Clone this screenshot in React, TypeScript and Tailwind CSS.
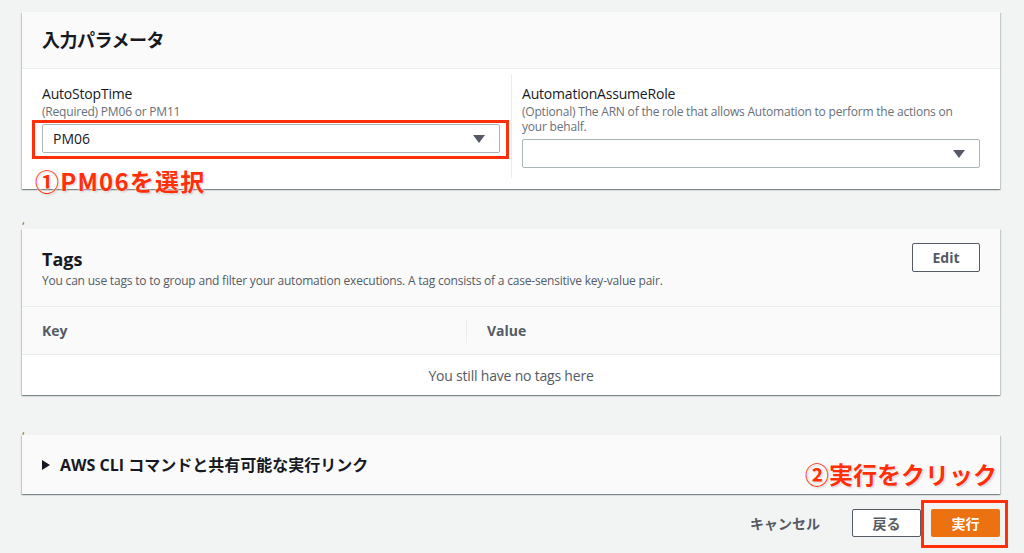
const font = "font-['Open_Sans','Noto_Sans_CJK_JP',sans-serif]"
const cardShadow =
  'shadow-[0_1px_1px_0_rgba(0,28,36,0.3),1px_1px_1px_0_rgba(0,28,36,0.15),-1px_1px_1px_0_rgba(0,28,36,0.15)]'
const note =
  "absolute font-['Noto_Sans_CJK_JP',sans-serif] font-bold text-[#ff2f0a] text-[24px] leading-[28px] [text-shadow:0_0_2px_#fff,0_0_2px_#fff,1px_1px_2px_rgba(0,0,0,0.25)]"

const Caret = () => (
  <svg width="12" height="8" viewBox="0 0 12 8">
    <path d="M0 0 L12 0 L6 8 Z" fill="#545b64" />
  </svg>
)

const Select = ({ value }: { value?: string }) => (
  <div className="flex h-[29px] items-center justify-between rounded-[2px] border border-[#aab7b8] bg-white pl-[10px] pr-[14px]">
    <span className="text-[14px] text-[#16191f]">{value}</span>
    <Caret />
  </div>
)

export default function App() {
  return (
    <div className={`relative h-[553px] w-full overflow-hidden bg-[#f2f3f3] ${font}`}>
      <div className="flex w-[978px] flex-col pl-[22px] pt-[12px] box-content">
        {/* input params */}
        <div className={`bg-white ${cardShadow}`}>
          <div className="flex h-[57px] items-center border-b border-[#eaeded] bg-[#fafafa] px-[20px]">
            <h2 className="text-[18px] font-bold tracking-[-0.5px] text-[#16191f]">入力パラメータ</h2>
          </div>
          <div className="grid h-[120px] grid-cols-2 px-[20px] pt-[5px] pb-[11px]">
            <div className="pr-[10px] pt-[10px]">
              <p className="text-[14px] leading-[20px] tracking-[-0.2px] text-[#16191f]">AutoStopTime</p>
              <p className="text-[12px] leading-[15px] tracking-[-0.2px] text-[#687078]">(Required) PM06 or PM11</p>
              <div className="mt-[5px] pr-[1px]">
                <Select value="PM06" />
              </div>
            </div>
            <div className="border-l border-[#eaeded] pl-[10px] pt-[10px]">
              <p className="text-[14px] leading-[20px] tracking-[-0.2px] text-[#16191f]">AutomationAssumeRole</p>
              <p className="pr-[10px] text-[12px] leading-[15px] tracking-[-0.2px] text-[#687078]">
                (Optional) The ARN of the role that allows Automation to perform the actions on your behalf.
              </p>
              <div className="mt-[5px]">
                <Select />
              </div>
            </div>
          </div>
        </div>

        <div className="h-[40px] pt-[28px] text-[11px] leading-[6px] text-[#545b64]">,</div>

        {/* tags */}
        <div className={`bg-white ${cardShadow}`}>
          <div className="flex h-[78px] items-start justify-between border-b border-[#eaeded] bg-[#fafafa] px-[20px] pt-[14px]">
            <div className="pt-[5px]">
              <h2 className="text-[18px] font-bold leading-[22px] text-[#16191f]">Tags</h2>
              <p className="mt-[3px] text-[12px] leading-[16px] tracking-[-0.2px] text-[#545b64]">
                You can use tags to to group and filter your automation executions. A tag consists of a case-sensitive key-value pair.
              </p>
            </div>
            <button className="h-[29px] w-[68px] rounded-[2px] border border-[#545b64] bg-white text-[14px] font-bold text-[#545b64]">
              Edit
            </button>
          </div>
          <div className="flex h-[48px] items-center border-b border-[#eaeded] bg-[#fafafa] text-[14px] font-bold text-[#545b64]">
            <div className="w-[444px] pl-[20px]">Key</div>
            <div className="h-[24px] border-l border-[#eaeded] pl-[20px] leading-[24px]">Value</div>
          </div>
          <div className="flex h-[40px] items-center justify-center text-[14px] tracking-[-0.2px] text-[#545b64]">
            You still have no tags here
          </div>
        </div>

        <div className="h-[40px] pt-[32px] text-[11px] leading-[6px] text-[#545b64]">,</div>

        {/* cli */}
        <div className={`flex h-[59px] items-center gap-[10px] bg-[#fafafa] px-[20px] ${cardShadow}`}>
          <svg width="8" height="10" viewBox="0 0 8 10">
            <path d="M0 0 L8 5 L0 10 Z" fill="#16191f" />
          </svg>
          <span className="text-[16px] font-bold text-[#16191f]">AWS CLI コマンドと共有可能な実行リンク</span>
        </div>

        {/* actions */}
        <div className="mt-[15px] flex items-center justify-end gap-[10px]">
          <button className="mr-[22px] text-[14px] font-bold text-[#545b64]">キャンセル</button>
          <button className="h-[28px] w-[69px] rounded-[2px] border border-[#545b64] bg-white text-[14px] font-bold text-[#545b64]">
            戻る
          </button>
          <button className="h-[28px] w-[69px] rounded-[2px] bg-[#ec7211] text-[14px] font-bold text-white">
            実行
          </button>
        </div>
      </div>

      {/* annotations */}
      <div className="absolute left-[32px] top-[120px] h-[39px] w-[477px] border-[3px] border-[#ff2f0a]" />
      <div className={`${note} left-[35px] top-[167px] tracking-[1.2px]`}>①PM06を選択</div>
      <div className={`${note} left-[805px] top-[460px]`}>②実行をクリック</div>
      <div className="absolute left-[921px] top-[500px] h-[48px] w-[87px] border-[3px] border-[#ff2f0a]" />
    </div>
  )
}
